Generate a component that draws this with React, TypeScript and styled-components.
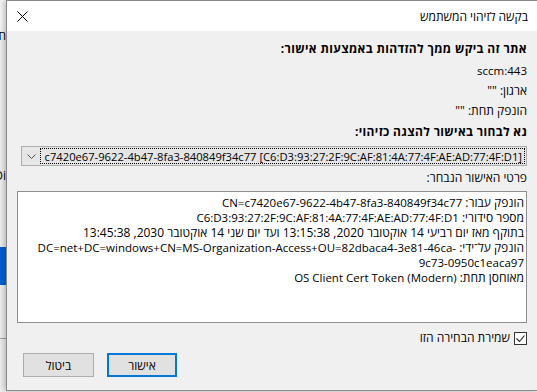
import React from "react";
import styled, { createGlobalStyle } from "styled-components";

const Global = createGlobalStyle`
  html, body { margin: 0; padding: 0; }
  body {
    width: 537px; height: 392px; overflow: hidden;
    font-family: "Segoe UI", "Open Sans", "Liberation Sans", "DejaVu Sans", sans-serif;
    font-size: 12px;
  }
`;

const Desktop = styled.div`
  position: relative;
  width: 537px;
  height: 392px;
  overflow: hidden;
  background: #f0f0f0;
`;

const BackWindow = styled.div`
  position: absolute;
  left: -200px;
  top: 0;
  width: 212px;
  height: 392px;
  background: #f0f0f0;
  display: flex;
  flex-direction: column;
  direction: rtl;
`;

const BackTitle = styled.div`
  height: 31px;
  background: #f7f7f7;
`;

const BackText = styled.div<{ $top: number }>`
  margin-top: ${(p) => p.$top}px;
  padding-right: 6px;
  font-size: 12px;
  line-height: 16px;
  color: #000;
  white-space: nowrap;
`;

const BackHighlight = styled.div`
  margin-top: 63px;
  height: 38px;
  background: #0063d1;
`;

const BackRule = styled.div`
  margin-top: 53px;
  height: 1px;
  background: #a0a0a0;
`;

const Dialog = styled.div`
  position: absolute;
  left: 6px;
  top: 0;
  width: 532px;
  height: 391px;
  box-sizing: border-box;
  border: 1px solid #8a8a8a;
  background: #f0f0f0;
  direction: rtl;
  display: flex;
  flex-direction: column;
  box-shadow: -2px 0 6px rgba(0, 0, 0, 0.25);
`;

const TitleBar = styled.div`
  height: 30px;
  flex: none;
  background: #ffffff;
  display: flex;
  align-items: center;
  justify-content: space-between;
  padding: 0 9px 0 0;
`;

const TitleText = styled.div`
  font-size: 12px;
  color: #000;
  padding-top: 1px;
`;

const CloseButton = styled.div`
  width: 30px;
  height: 30px;
  display: flex;
  align-items: center;
  justify-content: center;
`;

const Body = styled.div`
  flex: 1;
  display: flex;
  flex-direction: column;
  padding: 0 10px;
`;

const Label = styled.div<{ $bold?: boolean; $top: number }>`
  margin-top: ${(p) => p.$top}px;
  font-size: 12px;
  line-height: 16px;
  font-weight: ${(p) => (p.$bold ? 700 : 400)};
  letter-spacing: ${(p) => (p.$bold ? "0.35px" : "0")};
  color: #000;
  white-space: nowrap;
`;

const Latin = styled.span`
  font-size: 11.5px;
  line-height: 10px;
`;

const Combo = styled.div`
  margin-top: 6px;
  margin-left: 4px;
  height: 20px;
  box-sizing: border-box;
  border: 1px solid #adadad;
  background: #e5e5e5;
  display: flex;
  align-items: stretch;
  padding: 1px 1px 1px 0;
`;

const ComboValue = styled.div`
  flex: 1;
  box-sizing: border-box;
  border: 1px dotted #000;
  display: flex;
  align-items: center;
  justify-content: flex-start;
  padding: 0 2px;
  font-size: 11.2px;
  white-space: nowrap;
  overflow: hidden;
`;

const Ltr = styled.span`
  direction: ltr;
  unicode-bidi: isolate;
`;

const ComboArrow = styled.div`
  width: 18px;
  display: flex;
  align-items: center;
  justify-content: center;
`;

const Details = styled.div`
  margin-top: 5px;
  height: 132px;
  flex: none;
  box-sizing: border-box;
  border: 1px solid #8f8f8f;
  background: #ffffff;
  padding: 3px 2px 0 3px;
  font-size: 12px;
  line-height: 15px;
  color: #000;
`;

const DetailLine = styled.div``;

const CheckRow = styled.div`
  margin-top: 7px;
  display: flex;
  align-items: center;
  gap: 4px;
  font-size: 12px;
  line-height: 16px;
`;

const CheckBox = styled.div`
  width: 13px;
  height: 13px;
  box-sizing: border-box;
  border: 1px solid #333;
  background: #fff;
  display: flex;
  align-items: center;
  justify-content: center;
`;

const ButtonRow = styled.div`
  margin-top: 7px;
  display: flex;
  justify-content: flex-end;
  gap: 13px;
  padding-left: 6px;
`;

const Button = styled.div<{ $primary?: boolean }>`
  width: ${(p) => (p.$primary ? 70 : 71)}px;
  height: 24px;
  box-sizing: border-box;
  border: ${(p) => (p.$primary ? "2px solid #0078d7" : "1px solid #adadad")};
  background: #e1e1e1;
  display: flex;
  align-items: center;
  justify-content: center;
  font-size: 12px;
  color: #000;
`;

export default function App() {
  return (
    <Desktop>
      <Global />
      <BackWindow>
        <BackTitle />
        <BackText $top={-3}>חיפוש</BackText>
        <BackText $top={124}>
          <Ltr>Di</Ltr>
        </BackText>
        <BackHighlight />
        <BackRule />
      </BackWindow>
      <Dialog>
        <TitleBar>
          <TitleText>בקשה לזיהוי המשתמש</TitleText>
          <CloseButton>
            <svg width="11" height="11" viewBox="0 0 11 11">
              <path d="M0.5 0.5 L10.5 10.5 M10.5 0.5 L0.5 10.5" stroke="#000" strokeWidth="1" fill="none" />
            </svg>
          </CloseButton>
        </TitleBar>
        <Body>
          <Label $bold $top={10}>אתר זה ביקש ממך להזדהות באמצעות אישור:</Label>
          <Label $top={6}>
            <Latin>sccm:443</Latin>
          </Label>
          <Label $top={4}>ארגון: ""</Label>
          <Label $top={4}>הונפק תחת: ""</Label>
          <Label $bold $top={5}>נא לבחור באישור להצגה כזיהוי:</Label>
          <Combo>
            <ComboValue>
              <Ltr>c7420e67-9622-4b47-8fa3-840849f34c77 [C6:D3:93:27:2F:9C:AF:81:4A:77:4F:AE:AD:77:4F:D1]</Ltr>
            </ComboValue>
            <ComboArrow>
              <svg width="9" height="5" viewBox="0 0 9 5">
                <path d="M0.5 0.5 L4.5 4.5 L8.5 0.5" stroke="#555" strokeWidth="1" fill="none" />
              </svg>
            </ComboArrow>
          </Combo>
          <Label $top={4}>פרטי האישור הנבחר:</Label>
          <Details>
            <DetailLine>
              הונפק עבור: <Latin>CN=c7420e67-9622-4b47-8fa3-840849f34c77</Latin>
            </DetailLine>
            <DetailLine>
              מספר סידורי: <Latin>C6:D3:93:27:2F:9C:AF:81:4A:77:4F:AE:AD:77:4F:D1</Latin>
            </DetailLine>
            <DetailLine>בתוקף מאז יום רביעי 14 אוקטובר 2020, 13:15:38 ועד יום שני 14 אוקטובר 2030, 13:45:38</DetailLine>
            <DetailLine>
              הונפק על־ידי: <Latin>DC=net+DC=windows+CN=MS-Organization-Access+OU=82dbaca4-3e81-46ca-<wbr />9c73-0950c1eaca97</Latin>
            </DetailLine>
            <DetailLine>
              מאוחסן תחת: <Latin>OS Client Cert Token (Modern)</Latin>
            </DetailLine>
          </Details>
          <CheckRow>
            <CheckBox>
              <svg width="11" height="11" viewBox="0 0 11 11">
                <path d="M1.5 5.5 L4.5 8.5 L9.5 2.5" stroke="#222" strokeWidth="1.1" fill="none" />
              </svg>
            </CheckBox>
            שמירת הבחירה הזו
          </CheckRow>
          <ButtonRow>
            <Button $primary>אישור</Button>
            <Button>ביטול</Button>
          </ButtonRow>
        </Body>
      </Dialog>
    </Desktop>
  );
}
